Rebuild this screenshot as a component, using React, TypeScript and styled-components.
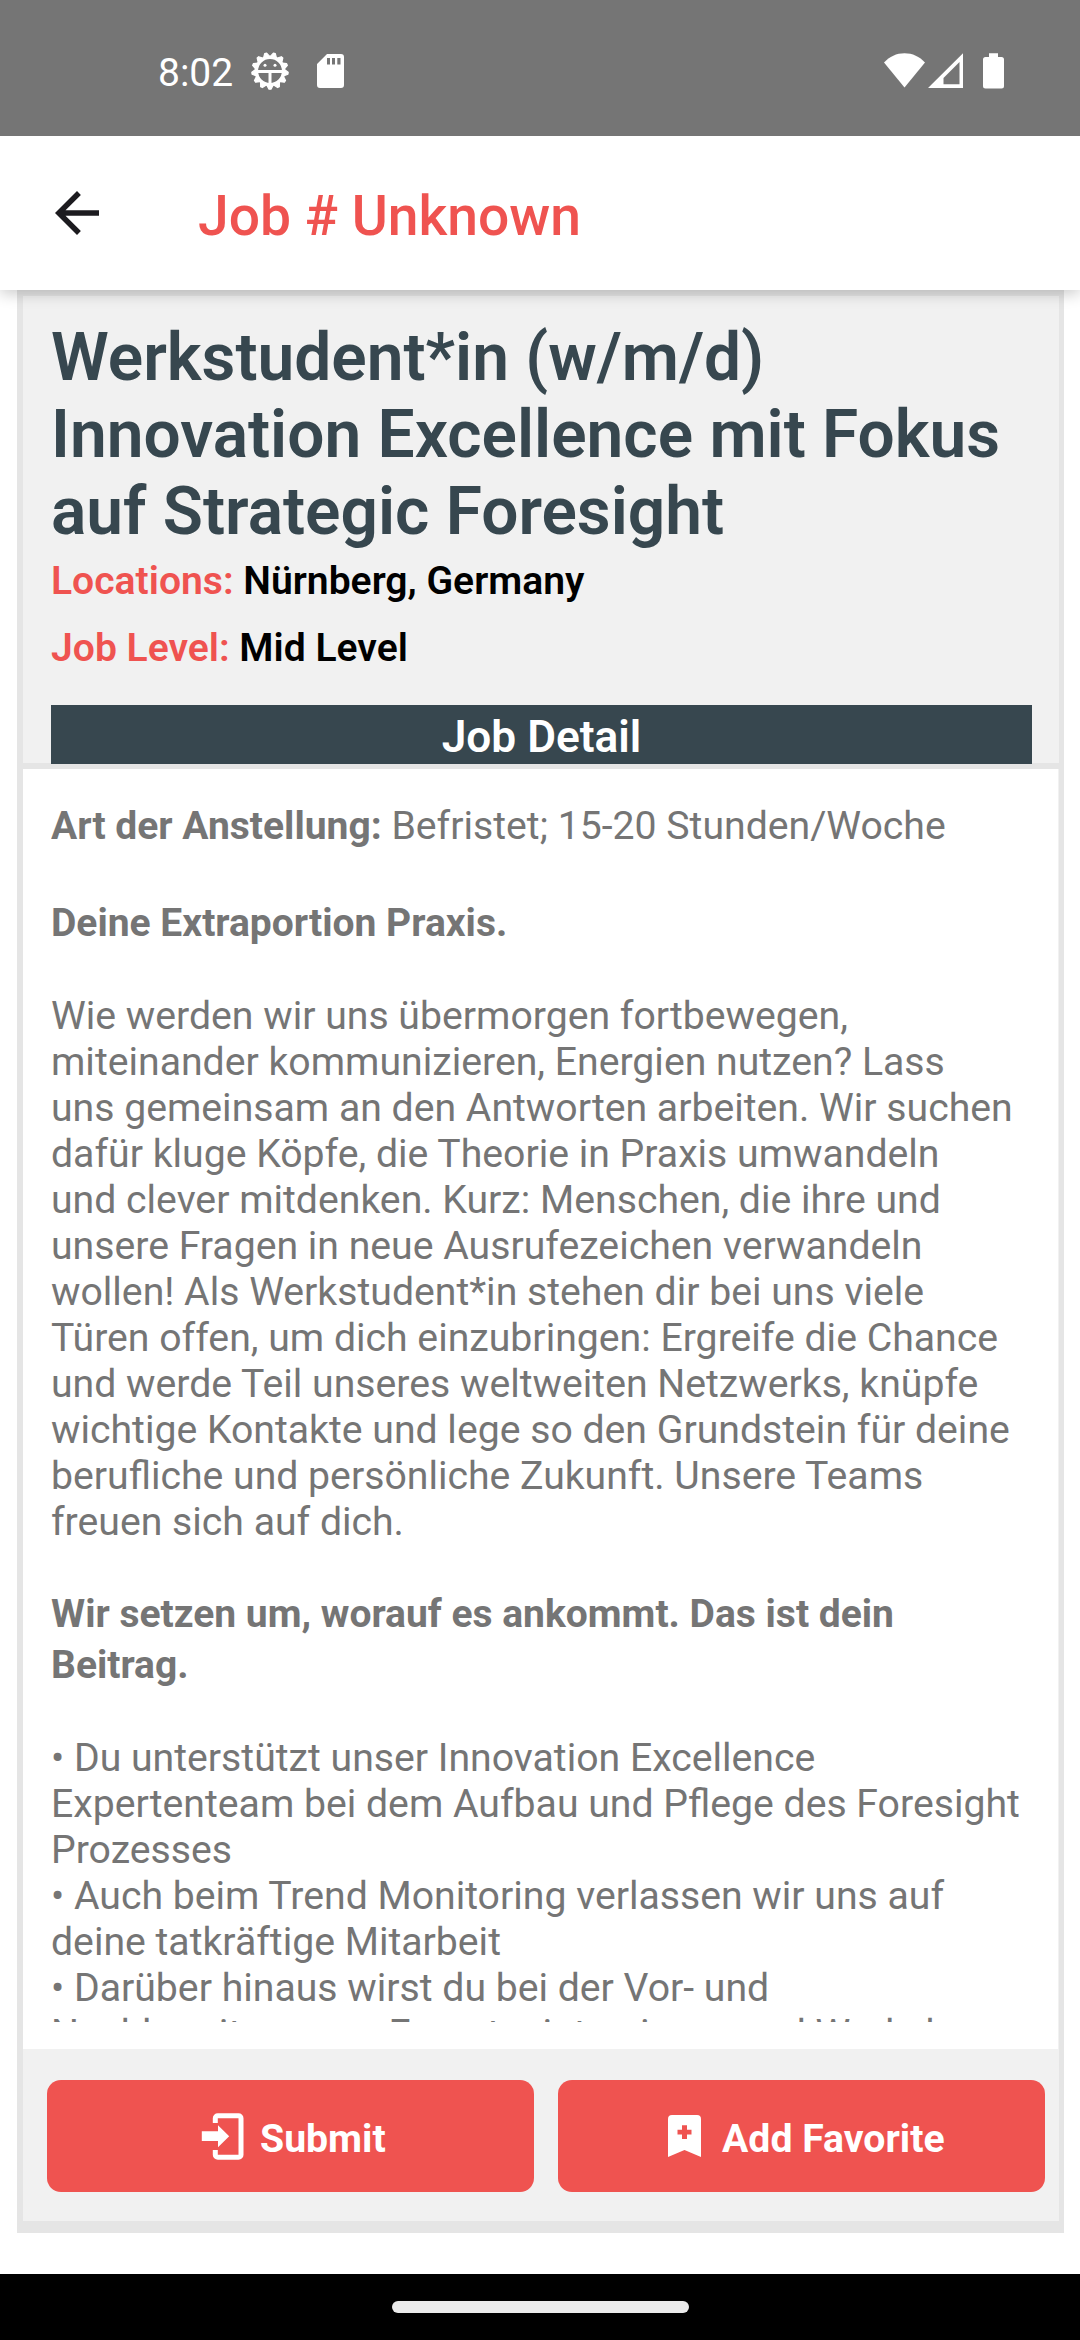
import React from "react";
import styled, { createGlobalStyle } from "styled-components";

const Global = createGlobalStyle`
  body { margin: 0; background: #fff; font-family: Roboto, "Liberation Sans", sans-serif; }
  * { box-sizing: border-box; }
`;

const Screen = styled.div`
  display: flex;
  flex-direction: column;
  width: 1080px;
  height: 2340px;
  overflow: hidden;
  background: #fff;
`;

const StatusBar = styled.div`
  position: relative;
  z-index: 2;
  display: flex;
  align-items: flex-start;
  justify-content: space-between;
  flex: none;
  height: 136px;
  padding: 50px 76px 0 158px;
  background: #757575;
  color: #fff;
`;

const StatusGroup = styled.div`
  display: flex;
  align-items: flex-start;
`;

const Clock = styled.span`
  font-size: 39px;
  line-height: 46px;
  width: 92px;
  white-space: nowrap;
`;

const StatusIcon = styled.svg<{ $top: number; $left?: number }>`
  flex: none;
  margin: ${(p) => p.$top}px 0 0 ${(p) => p.$left ?? 0}px;
`;

const AppBar = styled.header`
  position: relative;
  z-index: 1;
  display: flex;
  flex: none;
  height: 154px;
  padding: 0 55px;
  background: #fff;
  box-shadow: 0 4px 14px rgba(0, 0, 0, 0.2);
`;

const BackIcon = styled.svg`
  flex: none;
  margin-top: 55px;
`;

const AppTitle = styled.h1`
  margin: 48px 0 0 99px;
  font-size: 55.2px;
  line-height: 64px;
  font-weight: 500;
  color: #ef5350;
  white-space: nowrap;
`;

const Panel = styled.main`
  display: flex;
  flex-direction: column;
  flex: none;
  height: 1943px;
  margin: 0 16px 0 17px;
  border: 6px solid #e5e5e5;
  border-right-width: 5px;
  border-bottom-width: 12px;
  background: #f1f1f1;
`;

const Summary = styled.section`
  display: flex;
  flex-direction: column;
  flex: none;
  height: 473px;
  padding: 23px 27px 0 28px;
  border-bottom: 6px solid #e5e5e5;
`;

const JobTitle = styled.h2`
  margin: 0;
  font-size: 65.8px;
  line-height: 77px;
  font-weight: 600;
  color: #37474f;
  white-space: nowrap;
`;

const Fact = styled.p<{ $top: number }>`
  margin: ${(p) => p.$top}px 0 0;
  font-size: 39.1px;
  line-height: 45px;
  font-weight: 600;
  color: #000;
`;

const FactName = styled.span`
  color: #ef5350;
`;

const Banner = styled.div`
  flex: none;
  height: 65px;
  margin-top: auto;
  margin-bottom: -7px;
  border-bottom: 6px solid #e5e5e5;
  background: #37474f;
  color: #fff;
  font-size: 44.2px;
  line-height: 65px;
  font-weight: 600;
  text-align: center;
`;

const Body = styled.section`
  flex: 1;
  margin-right: 1px;
  padding: 34px 0 27px 28px;
  background: #fff;
`;

const Description = styled.div`
  height: 1219px;
  overflow: hidden;
  font-size: 39.2px;
  line-height: 46px;
  color: #757575;
  white-space: pre;
`;

const Paragraph = styled.p<{ $top?: number; $line?: number }>`
  margin: ${(p) => p.$top ?? 0}px 0 0;
  line-height: ${(p) => p.$line ?? 46}px;
`;

const Strong = styled.strong`
  font-size: 39px;
  font-weight: 700;
`;

const Actions = styled.footer`
  display: flex;
  flex: none;
  gap: 24px;
  height: 172px;
  padding: 31px 14px 29px 24px;
`;

const Action = styled.button`
  display: flex;
  align-items: flex-start;
  justify-content: flex-start;
  flex: 1;
  height: 112px;
  padding: 0;
  border: 0;
  border-radius: 14px;
  background: #ef5350;
  color: #fff;
  font-family: inherit;
  font-size: 39.2px;
  font-weight: 700;
  line-height: 45px;
`;

const ActionLabel = styled.span<{ $left: number }>`
  margin: 37px 0 0 ${(p) => p.$left}px;
  white-space: nowrap;
`;

const ActionIcon = styled.svg<{ $left: number; $top: number }>`
  flex: none;
  margin: ${(p) => p.$top}px 0 0 ${(p) => p.$left}px;
`;

const NavBar = styled.nav`
  display: flex;
  flex: none;
  justify-content: center;
  height: 66px;
  margin-top: auto;
  padding-top: 27px;
  background: #000;
`;

const NavPill = styled.div`
  width: 297px;
  height: 12px;
  border-radius: 6px;
  background: #ebebeb;
`;

const teeth = Array.from({ length: 13 }, (_, i) => (i * 360) / 13 + 180);

const DebugIcon = () => (
  <StatusIcon $top={1} width="40" height="40" viewBox="-20 -20 40 40">
    <circle r="13.6" fill="none" stroke="#fff" strokeWidth="3.4" />
    {teeth.map((a) => (
      <path key={a} d="M-3 -14.5L-1 -18.2H1L3 -14.5Z" fill="#fff" stroke="#fff" strokeWidth="1.2" strokeLinejoin="round" transform={`rotate(${a})`} />
    ))}
    <path d="M-13 .4H13M0 0V14" stroke="#fff" strokeWidth="3" />
    <circle cx="-5" cy="-5.8" r="1.5" fill="#fff" />
    <circle cx="5" cy="-5.8" r="1.5" fill="#fff" />
  </StatusIcon>
);

const SdCardIcon = () => (
  <StatusIcon $top={4} $left={27} width="27" height="34" viewBox="0 0 27 34">
    <path
      fill="#fff"
      fillRule="evenodd"
      d="M10 0H24a3 3 0 0 1 3 3V31a3 3 0 0 1-3 3H3a3 3 0 0 1-3-3V10ZM10 4V10.6H13V4ZM15 4V10.6H18V4ZM20.300 4V10.600H23.500V4Z"
    />
  </StatusIcon>
);

const WifiIcon = () => (
  <StatusIcon $top={3} width="41" height="35" viewBox="0 0 41 35">
    <path fill="#fff" d="M20.500 34.500L0 9.500C5.500 3.500 12.500 .2 20.500 .2S35.500 3.500 41 9.500Z" />
  </StatusIcon>
);

const SignalIcon = () => (
  <StatusIcon $top={3} $left={3} width="35" height="35" viewBox="0 0 35 35">
    <path fill="#fff" fillRule="evenodd" d="M35 .3V35H0ZM31.500 9L15.500 25V31.300H31.500Z" />
  </StatusIcon>
);

const BatteryIcon = () => (
  <StatusIcon $top={3} $left={20} width="21" height="36" viewBox="0 0 21 36">
    <path fill="#fff" d="M6 .3H15V4H18.500A2.500 2.500 0 0 1 21 6.500V33A2.500 2.500 0 0 1 18.500 35.500H2.500A2.500 2.500 0 0 1 0 33V6.500A2.500 2.500 0 0 1 2.500 4H6Z" />
  </StatusIcon>
);

const intro = `Wie werden wir uns übermorgen fortbewegen,
miteinander kommunizieren, Energien nutzen? Lass
uns gemeinsam an den Antworten arbeiten. Wir suchen
dafür kluge Köpfe, die Theorie in Praxis umwandeln
und clever mitdenken. Kurz: Menschen, die ihre und
unsere Fragen in neue Ausrufezeichen verwandeln
wollen! Als Werkstudent*in stehen dir bei uns viele
Türen offen, um dich einzubringen: Ergreife die Chance
und werde Teil unseres weltweiten Netzwerks, knüpfe
wichtige Kontakte und lege so den Grundstein für deine
berufliche und persönliche Zukunft. Unsere Teams
freuen sich auf dich.`;

const tasks = `• Du unterstützt unser Innovation Excellence
Expertenteam bei dem Aufbau und Pflege des Foresight
Prozesses
• Auch beim Trend Monitoring verlassen wir uns auf
deine tatkräftige Mitarbeit
• Darüber hinaus wirst du bei der Vor- und
Nachbereitung von Experteninterviews- und Workshops`;

export default function App() {
  return (
    <Screen>
      <Global />
      <StatusBar>
        <StatusGroup>
          <Clock>8:02</Clock>
          <DebugIcon />
          <SdCardIcon />
        </StatusGroup>
        <StatusGroup>
          <WifiIcon />
          <SignalIcon />
          <BatteryIcon />
        </StatusGroup>
      </StatusBar>
      <AppBar>
        <BackIcon width="44" height="44" viewBox="4 4 16 16">
          <path fill="#1c1b1f" d="M20 11H7.830l5.590-5.590L12 4l-8 8 8 8 1.410-1.410L7.830 13H20z" />
        </BackIcon>
        <AppTitle>Job # Unknown</AppTitle>
      </AppBar>
      <Panel>
        <Summary>
          <JobTitle>
            Werkstudent*in (w/m/d)
            <br />
            Innovation Excellence mit Fokus
            <br />
            auf Strategic Foresight
          </JobTitle>
          <Fact $top={9}>
            <FactName>Locations:</FactName> Nürnberg, Germany
          </Fact>
          <Fact $top={22}>
            <FactName>Job Level:</FactName> Mid Level
          </Fact>
          <Banner>Job Detail</Banner>
        </Summary>
        <Body>
          <Description>
            <Paragraph><Strong>Art der Anstellung:</Strong> Befristet; 15-20 Stunden/Woche</Paragraph>
            <Paragraph $top={51}><Strong>Deine Extraportion Praxis.</Strong></Paragraph>
            <Paragraph $top={47}>{intro}</Paragraph>
            <Paragraph $top={44} $line={51}><Strong>{"Wir setzen um, worauf es ankommt. Das ist dein\nBeitrag."}</Strong></Paragraph>
            <Paragraph $top={44}>{tasks}</Paragraph>
          </Description>
        </Body>
        <Actions>
          <Action>
            <ActionIcon $left={154} $top={33} width="43" height="47" viewBox="0 0 43 47">
              <path fill="none" stroke="#fff" strokeWidth="5" d="M14.300 10V5.300a2.500 2.500 0 0 1 2.500-2.500H37.500A2.500 2.500 0 0 1 40 5.300V41.700A2.500 2.500 0 0 1 37.500 44.200H16.800A2.500 2.500 0 0 1 14.300 41.700V37" />
              <path fill="#fff" d="M.8 18.300H17V12.300L28.200 23.300L17 34.300V28H.8Z" />
            </ActionIcon>
            <ActionLabel $left={16}>Submit</ActionLabel>
          </Action>
          <Action>
            <ActionIcon $left={110} $top={35} width="33" height="42" viewBox="0 0 33 42">
              <path fill="#fff" fillRule="evenodd" d="M4 0H29a4 4 0 0 1 4 4V42L16.500 35L0 42V4A4 4 0 0 1 4 0ZM14 10.200V14.800H9.500V19.500H14V24H19V19.500H23.500V14.800H19V10.200Z" />
            </ActionIcon>
            <ActionLabel $left={21}>Add Favorite</ActionLabel>
          </Action>
        </Actions>
      </Panel>
      <NavBar>
        <NavPill />
      </NavBar>
    </Screen>
  );
}
